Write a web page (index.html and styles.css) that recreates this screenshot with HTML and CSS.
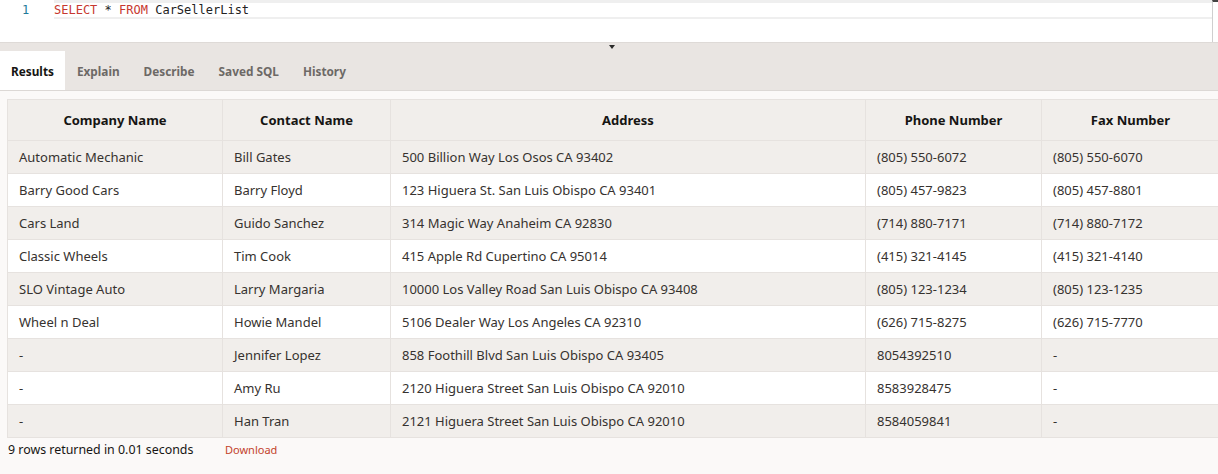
FILE: index.html
```html
<!DOCTYPE html>
<html>
<head>
<meta charset="utf-8">
<link rel="stylesheet" href="styles.css">
</head>
<body>
<div class="editor">
  <div class="gutter"><span class="ln">1</span></div>
  <div class="code">
    <div class="line"><span class="kw">SELECT</span> * <span class="kw">FROM</span> CarSellerList</div>
  </div>
  <div class="scroll"></div>
</div>
<div class="toolbar">
  <div class="splitter"><span class="tri"></span></div>
  <div class="tabs">
    <div class="tab active">Results</div>
    <div class="tab">Explain</div>
    <div class="tab">Describe</div>
    <div class="tab">Saved SQL</div>
    <div class="tab">History</div>
  </div>
</div>
<div class="content">
  <table class="grid">
    <colgroup>
      <col class="c1"><col class="c2"><col class="c3"><col class="c4"><col class="c5">
    </colgroup>
    <thead>
      <tr><th>Company Name</th><th>Contact Name</th><th>Address</th><th>Phone Number</th><th>Fax Number</th></tr>
    </thead>
    <tbody>
      <tr><td>Automatic Mechanic</td><td>Bill Gates</td><td>500 Billion Way Los Osos CA 93402</td><td>(805) 550-6072</td><td>(805) 550-6070</td></tr>
      <tr><td>Barry Good Cars</td><td>Barry Floyd</td><td>123 Higuera St. San Luis Obispo CA 93401</td><td>(805) 457-9823</td><td>(805) 457-8801</td></tr>
      <tr><td>Cars Land</td><td>Guido Sanchez</td><td>314 Magic Way Anaheim CA 92830</td><td>(714) 880-7171</td><td>(714) 880-7172</td></tr>
      <tr><td>Classic Wheels</td><td>Tim Cook</td><td>415 Apple Rd Cupertino CA 95014</td><td>(415) 321-4145</td><td>(415) 321-4140</td></tr>
      <tr><td>SLO Vintage Auto</td><td>Larry Margaria</td><td>10000 Los Valley Road San Luis Obispo CA 93408</td><td>(805) 123-1234</td><td>(805) 123-1235</td></tr>
      <tr><td>Wheel n Deal</td><td>Howie Mandel</td><td>5106 Dealer Way Los Angeles CA 92310</td><td>(626) 715-8275</td><td>(626) 715-7770</td></tr>
      <tr><td>-</td><td>Jennifer Lopez</td><td>858 Foothill Blvd San Luis Obispo CA 93405</td><td>8054392510</td><td>-</td></tr>
      <tr><td>-</td><td>Amy Ru</td><td>2120 Higuera Street San Luis Obispo CA 92010</td><td>8583928475</td><td>-</td></tr>
      <tr><td>-</td><td>Han Tran</td><td>2121 Higuera Street San Luis Obispo CA 92010</td><td>8584059841</td><td>-</td></tr>
    </tbody>
  </table>
  <div class="footer">
    <span class="count">9 rows returned in 0.01 seconds</span>
    <a class="download">Download</a>
  </div>
</div>
</body>
</html>
```
FILE: styles.css
```css
html, body {
  margin: 0;
  padding: 0;
}
body {
  width: 1218px;
  height: 474px;
  overflow: hidden;
  background: #fbf9f8;
  font-family: "Noto Sans", sans-serif;
}
.editor {
  display: flex;
  height: 42px;
  background: #ffffff;
  position: relative;
}
.gutter {
  width: 54px;
  flex: none;
}
.ln {
  display: block;
  font-family: "DejaVu Sans Mono", monospace;
  font-size: 12px;
  line-height: 14px;
  padding: 3px 0 0 22px;
  color: #1f7a9a;
}
.code {
  flex: 1;
}
.line {
  height: 14px;
  border-top: 3px solid #efefef;
  border-bottom: 2px solid #efefef;
  font-family: "DejaVu Sans Mono", monospace;
  font-size: 12px;
  line-height: 14px;
  color: #222;
}
.kw {
  color: #c7372f;
}
.scroll {
  width: 6px;
  flex: none;
  border-left: 1px solid #cfcfcf;
  box-sizing: border-box;
  border-top: 2px solid #444;
}
.toolbar {
  background: #e9e5e2;
  border-top: 1px solid #dedad7;
  border-bottom: 1px solid #dcd8d5;
}
.splitter {
  height: 8px;
  display: flex;
  justify-content: center;
}
.tri {
  margin-top: 2px;
  margin-left: 6px;
  width: 0;
  height: 0;
  border-left: 3.5px solid transparent;
  border-right: 3.5px solid transparent;
  border-top: 4px solid #2a2a2a;
}
.tabs {
  display: flex;
  height: 39px;
}
.tab {
  padding: 0 12px 0 12px;
  font-size: 11.8px;
  font-weight: 700;
  line-height: 41px;
  color: #6d6966;
}
.tab.active {
  background: #ffffff;
  color: #161513;
  padding: 0 11px 0 11px;
}
.content {
  padding: 8px 0 0 7px;
}
.grid {
  border-collapse: collapse;
  width: 1212px;
  table-layout: fixed;
  font-size: 13px;
  color: #36322f;
}
.c1 { width: 215px; }
.c2 { width: 168px; }
.c3 { width: 475px; }
.c4 { width: 176px; }
.c5 { width: 178px; }
.grid th {
  height: 40px;
  background: #f1eeeb;
  border: 1px solid #e6e2df;
  font-weight: 700;
  color: #161513;
  text-align: center;
  padding: 0;
}
.grid td {
  height: 32px;
  border: 1px solid #e6e2df;
  padding: 0 0 0 11px;
  white-space: nowrap;
}
.grid tbody tr:nth-child(odd) td {
  background: #f1eeeb;
}
.grid tbody tr:nth-child(even) td {
  background: #ffffff;
}
.footer {
  display: flex;
  align-items: center;
  height: 22px;
  padding-left: 1px;
}
.count {
  font-size: 12.4px;
  color: #161513;
  width: 217px;
}
.download {
  font-size: 11px;
  color: #c3432b;
}
```
